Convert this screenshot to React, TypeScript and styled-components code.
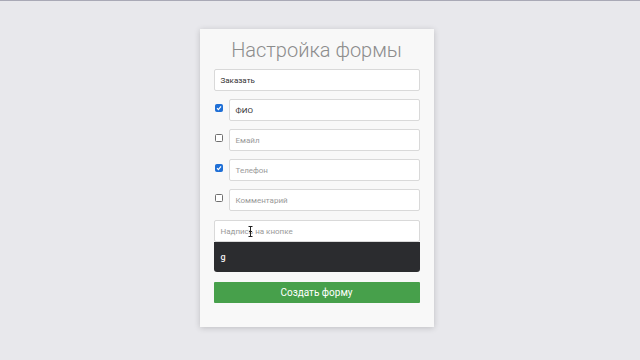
import React from 'react'
import styled, { createGlobalStyle } from 'styled-components'

const GlobalStyle = createGlobalStyle`
  html, body {
    margin: 0;
    padding: 0;
    background: #e8e8ec;
    font-family: Roboto, "Liberation Sans", sans-serif;
  }
  * { box-sizing: border-box; }
`

const Page = styled.div`
  width: 640px;
  height: 360px;
  border-top: 1px solid #a9a9b6;
  display: flex;
  justify-content: center;
  align-items: flex-start;
  padding: 28px 7px 0 0;
`

const Card = styled.form`
  width: 234px;
  height: 298px;
  background: #f8f8f8;
  box-shadow: 0 1px 6px rgba(0, 0, 0, 0.18);
  padding: 9px 14px 0 14px;
  display: flex;
  flex-direction: column;
`

const Title = styled.h2`
  margin: 0 0 6px 0;
  font-size: 20px;
  line-height: 25px;
  font-weight: 300;
  color: #8c8c8c;
  text-align: center;
`

const Field = styled.div<{ $value?: boolean; $grow?: boolean }>`
  flex: ${(p) => (p.$grow ? '1 1 auto' : '0 0 auto')};
  height: 22px;
  background: #fff;
  border: 1px solid #d9d9d9;
  border-radius: 2px;
  display: flex;
  align-items: center;
  padding: 0 6px;
  font-size: 8px;
  color: ${(p) => (p.$value ? '#333' : '#9a9a9a')};
  position: relative;
`

const Row = styled.div`
  display: flex;
  align-items: center;
  height: 22px;
  margin-top: 8px;
`

const BoxCell = styled.div`
  width: 15px;
  display: flex;
  padding-left: 1px;
  padding-bottom: 5px;
`

const Box = styled.span<{ $on: boolean }>`
  width: 8px;
  height: 8px;
  border-radius: 1.5px;
  border: 1px solid ${(p) => (p.$on ? '#1f6fd6' : '#6f6f6f')};
  background: ${(p) => (p.$on ? '#1f6fd6' : '#fff')};
  display: flex;
  align-items: center;
  justify-content: center;
`

const LabelGroup = styled.div`
  display: flex;
  flex-direction: column;
  margin-top: 9px;
`

const Suggest = styled.div`
  height: 30px;
  background: #2b2c2f;
  border-radius: 0 0 3px 3px;
  display: flex;
  align-items: center;
  padding: 0 7px;
  color: #f2f2f2;
  font-size: 9px;
  font-weight: 500;
`

const Submit = styled.button`
  margin-top: 10px;
  height: 21px;
  border: 0;
  border-radius: 1px;
  background: #47a04b;
  color: #fff;
  font-family: Roboto, "Liberation Sans", sans-serif;
  font-size: 10px;
  font-weight: 400;
`

const Cursor = styled.svg`
  position: absolute;
  left: 33px;
  top: 5px;
`

const Check = () => (
  <svg width="6" height="6" viewBox="0 0 6 6">
    <path d="M1 3.2 L2.4 4.6 L5 1.4" stroke="#fff" strokeWidth="1.2" fill="none" />
  </svg>
)

const fields = [
  { label: 'ФИО', on: true, value: true },
  { label: 'Емайл', on: false, value: false },
  { label: 'Телефон', on: true, value: false },
  { label: 'Комментарий', on: false, value: false }
]

const App = () => {
  return (
    <Page>
      <GlobalStyle />
      <Card>
        <Title>Настройка формы</Title>
        <Field $value>Заказать</Field>
        {fields.map((f) => (
          <Row key={f.label}>
            <BoxCell>
              <Box $on={f.on}>{f.on && <Check />}</Box>
            </BoxCell>
            <Field $grow $value={f.value}>{f.label}</Field>
          </Row>
        ))}
        <LabelGroup>
          <Field>
            Надпись на кнопке
            <Cursor width="5" height="11" viewBox="0 0 5 11">
              <path d="M0.5 0.5 H4.5 M2.5 0.5 V10.5 M0.5 10.5 H4.5 M1 5.5 H4" stroke="#222" strokeWidth="1" fill="none" />
            </Cursor>
          </Field>
          <Suggest>g</Suggest>
        </LabelGroup>
        <Submit type="button">Создать форму</Submit>
      </Card>
    </Page>
  )
}

export default App
